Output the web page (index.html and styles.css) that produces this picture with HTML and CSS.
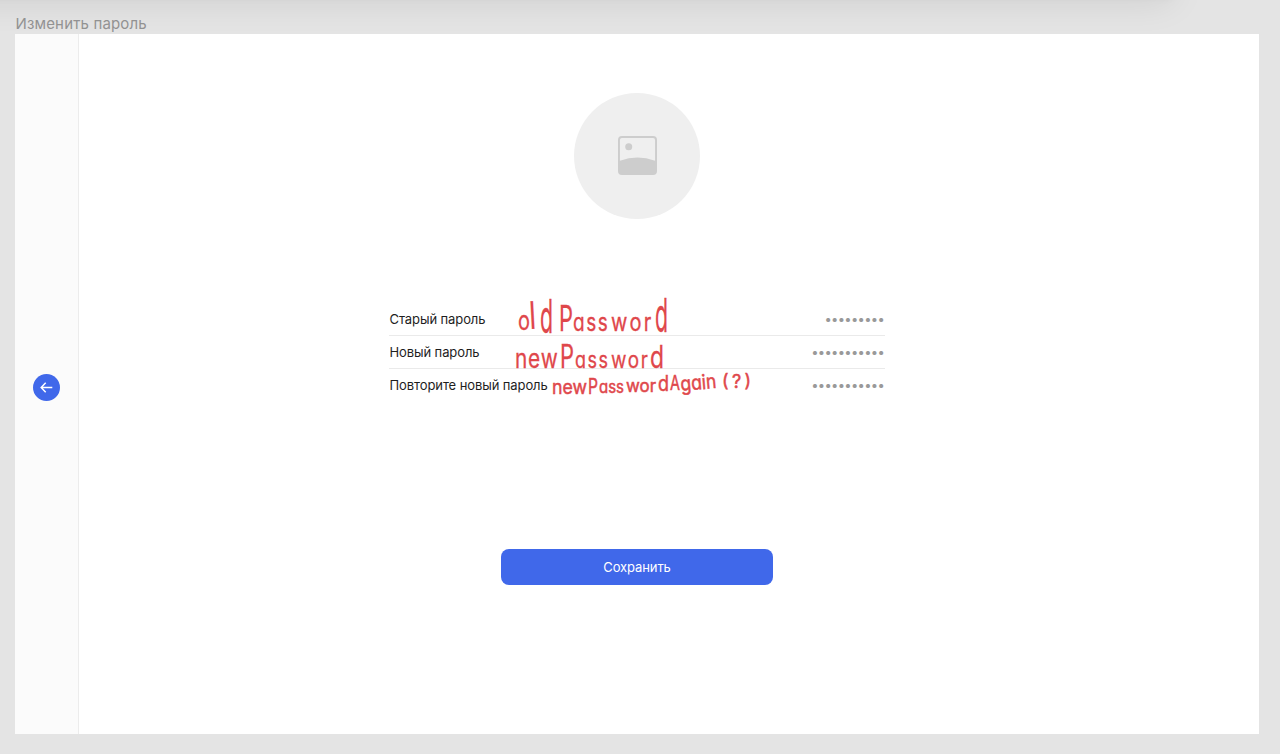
FILE: index.html
```html
<!DOCTYPE html>
<html lang="ru">
<head>
<meta charset="utf-8">
<title>Изменить пароль</title>
<link rel="stylesheet" href="styles.css">
</head>
<body>
<div class="toolbar-shadow"></div>
<div class="canvas">
  <div class="frame-label">Изменить пароль</div>
  <div class="frame">
    <aside class="sidebar">
      <button class="back" aria-label="Назад">
        <svg width="27" height="27" viewBox="0 0 27 27" fill="none" stroke="#fff" stroke-width="1.5"><path d="M19.300 13.500H8.500M12.700 8.800L8.200 13.500L12.700 18.200"/></svg>
      </button>
    </aside>
    <main class="content">
      <div class="avatar">
        <svg width="39" height="39" viewBox="0 0 40 40"><path fill="#cdcdcd" fill-rule="evenodd" d="M4 0H36Q40 0 40 4V36Q40 40 36 40H4Q0 40 0 36V4Q0 0 4 0ZM4 2Q2 2 2 4V25.500Q20 18.500 38 25.500V4Q38 2 36 2Z"/><circle cx="11" cy="11" r="3.600" fill="#cdcdcd"/></svg>
      </div>
      <div class="form">
        <div class="row"><span class="name">Старый пароль</span><span class="dots">•••••••••</span></div>
        <div class="row"><span class="name">Новый пароль</span><span class="dots">•••••••••••</span></div>
        <div class="row"><span class="name">Повторите новый пароль</span><span class="dots">•••••••••••</span></div>
      </div>
      <button class="save">Сохранить</button>
    </main>
  </div>
</div>
<svg class="notes" width="250" height="115" viewBox="510 290 250 115">
  <g>
    <text x="518" y="330" font-size="27" textLength="12" lengthAdjust="spacingAndGlyphs">o</text>
    <text font-size="38" transform="translate(530 329) rotate(-3) scale(.7 1)">l</text>
    <text x="540" y="333" font-size="46" textLength="13" lengthAdjust="spacingAndGlyphs">d</text>
    <text x="559" y="331" font-size="36" textLength="14" lengthAdjust="spacingAndGlyphs">P</text>
    <text font-size="25" letter-spacing="2" transform="translate(573 331) scale(.76 1)">ass</text>
    <text font-size="25" letter-spacing="3" transform="translate(611 331) scale(.8 1)">wor</text>
    <text x="655" y="332" font-size="47" textLength="13" lengthAdjust="spacingAndGlyphs">d</text>
  </g>
  <g>
    <text font-size="26" letter-spacing="1" transform="translate(515 368) scale(.8 1)">new</text>
    <text x="560" y="368" font-size="32" textLength="14" lengthAdjust="spacingAndGlyphs">P</text>
    <text font-size="23" letter-spacing="2" transform="translate(575 368) scale(.78 1)">ass</text>
    <text font-size="23" letter-spacing="2" transform="translate(611 368) scale(.82 1)">wor</text>
    <text x="650" y="368" font-size="31" textLength="14" lengthAdjust="spacingAndGlyphs">d</text>
  </g>
  <g class="small">
    <text x="552" y="394" font-size="20" textLength="35" lengthAdjust="spacingAndGlyphs">new</text>
    <text x="588" y="394" font-size="22" textLength="10" lengthAdjust="spacingAndGlyphs">P</text>
    <text x="599" y="393" font-size="17" textLength="25" lengthAdjust="spacingAndGlyphs">ass</text>
    <text x="626" y="392" font-size="18" textLength="30" lengthAdjust="spacingAndGlyphs">wor</text>
    <text x="658" y="391" font-size="21" textLength="11" lengthAdjust="spacingAndGlyphs">d</text>
    <text x="670" y="390" font-size="20" textLength="10" lengthAdjust="spacingAndGlyphs">A</text>
    <text x="681" y="391" font-size="20" textLength="36" lengthAdjust="spacingAndGlyphs" transform="rotate(-5 681 391)">gain</text>
    <text x="722" y="388" font-size="18" textLength="29" lengthAdjust="spacing">(?)</text>
  </g>
</svg>
</body>
</html>
```
FILE: styles.css
```css
* { box-sizing: border-box; }
body { margin: 0; height: 754px; overflow: hidden; background: #e4e4e4; font-family: Inter, sans-serif; position: relative; }
.toolbar-shadow { position: absolute; left: -60px; top: -30px; width: 1232px; height: 28px; box-shadow: 0 2px 36px rgba(0,0,0,.11), 0 0 8px rgba(0,0,0,.05); }
.canvas { position: relative; padding: 13px 21px 20px 15px; }
.frame-label { height: 21px; padding-left: .5px; font-size: 15px; line-height: 21px; color: #929292; letter-spacing: .15px; }
.frame { height: 700px; display: flex; background: #fff; }
.sidebar { width: 64px; background: #fbfbfb; border-right: 1px solid #ececec; display: flex; align-items: center; justify-content: center; padding-top: 7px; }
.back { width: 27px; height: 27px; padding: 0; border: 0; border-radius: 50%; background: #4068ea; display: flex; }
.content { flex: 1; display: flex; flex-direction: column; align-items: center; padding: 58.5px 64px 0 0; }
.avatar { width: 126px; height: 126px; border-radius: 50%; background: #efefef; display: flex; align-items: center; justify-content: center; }
.form { width: 496px; margin-top: 84.5px; }
.row { height: 33px; display: flex; align-items: center; justify-content: space-between; border-bottom: 1px solid #eaeaea; font-size: 13px; letter-spacing: -.1px; color: #1e1e1e; }
.row:last-child { border-bottom-color: transparent; }
.name { padding-left: .5px; }
.dots { color: #999; letter-spacing: -.7px; padding-right: 1px; }
.save { width: 272px; height: 36px; margin-top: 147px; border: 0; border-radius: 8px; background: #4068ea; color: #fff; font: 13px Inter, sans-serif; letter-spacing: -.1px; }
.notes { position: absolute; left: 510px; top: 290px; overflow: visible; }
.notes text { fill: #df474b; stroke: #df474b; stroke-width: .3px; font-family: Inter, sans-serif; font-feature-settings: "cv11"; }
.notes .small text { stroke-width: .5px; }
```
